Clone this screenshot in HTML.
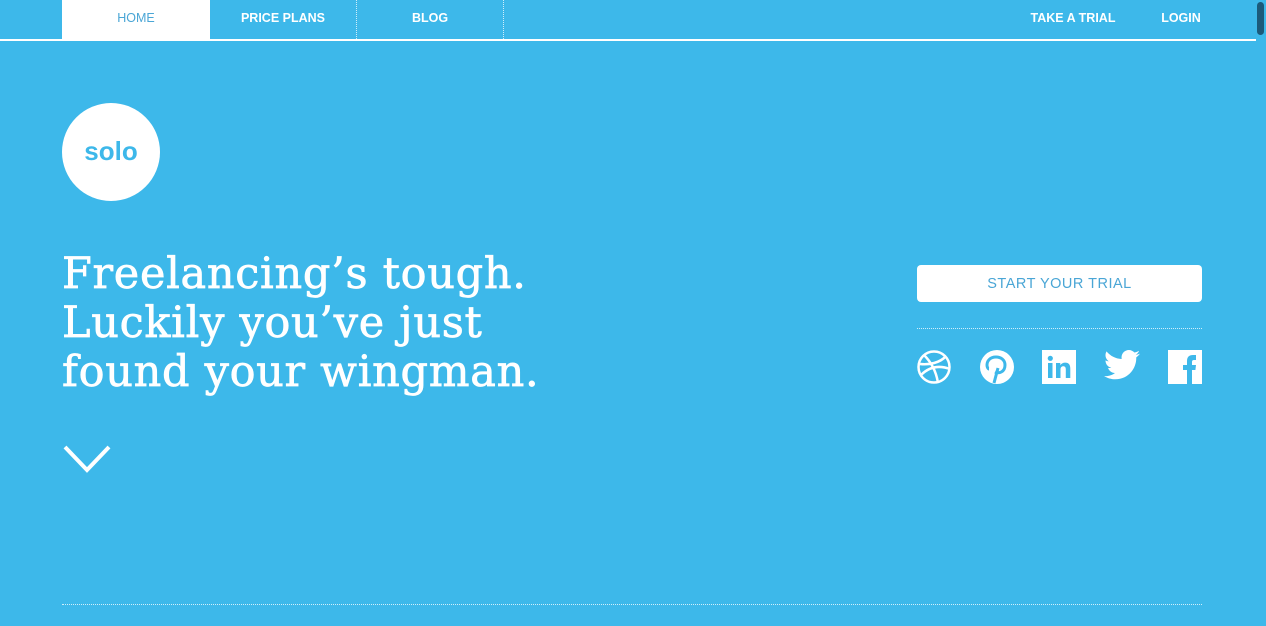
<!DOCTYPE html>
<html><head><style>
*{margin:0;padding:0;box-sizing:border-box}
body{width:1266px;height:626px;background:#3db8ea;overflow:hidden;position:relative;font-family:"Liberation Sans",sans-serif;color:#fff}
.nav{position:absolute;top:0;left:0;width:1256px;height:41px;border-bottom:2px solid #fff}
.nav a{position:absolute;top:0;height:39px;line-height:37px;font-size:12.5px;font-weight:bold;color:#fff;text-align:center;text-decoration:none}
.home{left:62px;width:148px;background:#fff;color:#4aa6d6!important;font-weight:normal!important}
.pp{left:210px;width:147px;border-right:1px dotted #cfeefa}
.blog{left:357px;width:147px;border-right:1px dotted #cfeefa}
.sb{position:absolute;right:2px;top:2px;width:7px;height:33px;border-radius:4px;background:#1c5a7a}
.logo{position:absolute;left:62px;top:103px;width:98px;height:98px;border-radius:50%;background:#fff;color:#3db8ea;font-size:26px;font-weight:bold;text-align:center;line-height:96px}
h1{position:absolute;left:62px;top:250px;font-family:"DejaVu Serif",serif;font-weight:normal;font-size:43px;line-height:49px;letter-spacing:0.7px;-webkit-text-stroke:0.7px #fff;white-space:nowrap}
.btn{position:absolute;left:917px;top:265px;width:285px;height:37px;background:#fff;border-radius:4px;color:#4aa6d6;font-size:14.5px;text-align:center;line-height:38px;letter-spacing:.5px}
.dots{position:absolute;left:917px;top:328px;width:285px;border-top:1px dotted #cfeefa}
.bot{position:absolute;left:62px;top:604px;width:1140px;border-top:1px dotted #cfeefa}
svg{position:absolute}
</style></head><body>
<div class="nav">
<a class="home">HOME</a><a class="pp">PRICE PLANS</a><a class="blog">BLOG</a>
<a style="left:1020px;width:106px">TAKE A TRIAL</a><a style="left:1150px;width:62px">LOGIN</a>
</div>
<div class="sb"></div>
<div class="logo">solo</div>
<h1>Freelancing’s tough.<br>Luckily you’ve just<br>found your wingman.</h1>
<svg style="left:62px;top:444px" width="50" height="30"><polyline points="3,3 25,26 47,3" fill="none" stroke="#fff" stroke-width="4"/></svg>
<div class="btn">START YOUR TRIAL</div>
<div class="dots"></div>
<svg style="left:917px;top:350px" width="34" height="34" viewBox="0 0 34 34" fill="none" stroke="#fff" stroke-width="2.5"><circle cx="17" cy="17" r="15.5"/><path d="M7 5c6 6 12 15 14 28M3 14c9 1 20-1 26-8M4 25c8-8 18-10 29-6"/></svg>
<svg style="left:980px;top:350px" width="34" height="34" viewBox="0 0 34 34"><circle cx="17" cy="17" r="17" fill="#fff"/><path d="M14 33l4-15M15 22c4 2 10 0 10-7 0-5-4-8-9-8-6 0-9 4-9 8 0 2 1 4 2 4" fill="none" stroke="#3db8ea" stroke-width="3"/></svg>
<svg style="left:1042px;top:350px" width="34" height="34" viewBox="0 0 34 34"><rect width="34" height="34" fill="#fff"/><rect x="6" y="13" width="4.5" height="15" fill="#3db8ea"/><circle cx="8.3" cy="8.3" r="2.6" fill="#3db8ea"/><path d="M14 13h4.3v2.2c1-1.6 2.6-2.6 5-2.6 3.4 0 5 2 5 6V28h-4.5v-8.6c0-2-.7-3.2-2.5-3.2s-2.8 1.3-2.8 3.2V28H14z" fill="#3db8ea"/></svg>
<svg style="left:1104px;top:350px" width="36" height="30" viewBox="0 0 24 20"><path d="M24 2.4c-.9.4-1.8.6-2.8.8 1-.6 1.8-1.6 2.2-2.7-1 .6-2 1-3.1 1.2C19.3.7 18 0 16.6 0c-2.7 0-4.9 2.2-4.9 4.9 0 .4 0 .8.1 1.1C7.7 5.8 4.1 3.9 1.7.9c-.4.7-.7 1.6-.7 2.5 0 1.7.9 3.2 2.2 4.1-.8 0-1.6-.2-2.2-.6v.1c0 2.4 1.7 4.4 3.9 4.8-.4.1-.8.2-1.3.2-.3 0-.6 0-.9-.1.6 2 2.4 3.4 4.6 3.4-1.7 1.3-3.8 2.1-6.1 2.1-.4 0-.8 0-1.2-.1 2.2 1.4 4.8 2.2 7.5 2.2 9.1 0 14-7.5 14-14v-.6c1-.7 1.8-1.6 2.5-2.5z" fill="#fff"/></svg>
<svg style="left:1168px;top:350px" width="34" height="34" viewBox="0 0 34 34"><rect width="34" height="34" fill="#fff"/><path d="M19 34V20h-4v-5h4v-4c0-4 2-6 6-6h3v5h-2c-1.5 0-2 .6-2 2v3h4l-.6 5H24v14z" fill="#3db8ea"/></svg>
<div class="bot"></div>
</body></html>
